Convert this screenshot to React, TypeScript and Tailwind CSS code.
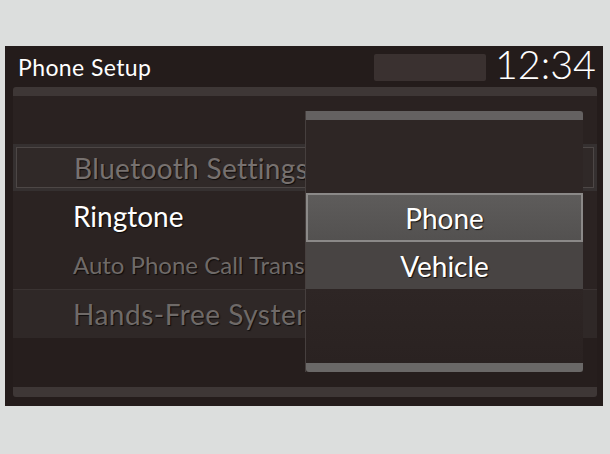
const ROWS = [
  { label: "Bluetooth Settings", size: "text-[28px] tracking-[0.35px]", tone: "text-[#77716f]", h: "h-[47px]", kind: "framed" },
  { label: "Ringtone", size: "text-[28px]", tone: "text-white", h: "h-[49px]", kind: "plain" },
  { label: "Auto Phone Call Transfer", size: "text-[24px]", tone: "text-[#6f6a68]", h: "h-[50px]", kind: "split" },
  { label: "Hands-Free System Volume", size: "text-[28px] tracking-[0.5px]", tone: "text-[#6f6a68]", h: "h-[48px]", kind: "lit" },
];

const OPTIONS = [
  { label: "Phone", active: true },
  { label: "Vehicle", active: false },
];

function ListRow({ row }: { row: (typeof ROWS)[number] }) {
  const text = (
    <span
      className={`whitespace-nowrap leading-none ${row.size} ${row.tone} [text-shadow:1px_1px_1px_rgba(0,0,0,0.7)]`}
    >
      {row.label}
    </span>
  );

  if (row.kind === "framed") {
    return (
      <div className={`${row.h} bg-[#353030] p-[3px]`}>
        <div className="flex h-full items-center overflow-hidden border border-[#4d4746] bg-[#302928] pl-[57px]">
          {text}
        </div>
      </div>
    );
  }

  return (
    <div
      className={`${row.h} flex items-center overflow-hidden pl-[60px] ${
        row.kind === "lit" ? "bg-[#2f2827]" : "bg-[#2b2322]"
      } ${row.kind === "split" ? "border-b border-[#3a3332]" : ""}`}
    >
      {text}
    </div>
  );
}

function RingtonePopup() {
  return (
    <div className="absolute left-[300px] top-[65px] flex h-[261px] w-[278px] flex-col border-l border-[#463f3e] bg-[#2e2625]">
      <div className="h-[9px] rounded-tr-[3px] bg-[#646161]" />
      <div className="h-[73px]" />
      {OPTIONS.map((o) =>
        o.active ? (
          <div
            key={o.label}
            className="flex h-[49px] items-center justify-center border-2 border-[#8b8988] bg-gradient-to-b from-[#5e5c5b] to-[#535150]"
          >
            <span className="text-[28px] leading-none text-white [text-shadow:1px_1px_1px_rgba(0,0,0,0.8)]">
              {o.label}
            </span>
          </div>
        ) : (
          <div
            key={o.label}
            className="flex h-[47px] items-center justify-center bg-[#484443]"
          >
            <span className="text-[28px] leading-none text-white [text-shadow:1px_1px_1px_rgba(0,0,0,0.8)]">
              {o.label}
            </span>
          </div>
        )
      )}
      <div className="flex-1 bg-gradient-to-b from-[#2e2625] to-[#2a2221]" />
      <div className="h-[9px] rounded-b-[3px] bg-[#6a6867]" />
    </div>
  );
}

export default function App() {
  return (
    <div className="h-[454px] w-[610px] bg-[#dcdedd] pl-[5px] pt-[46px] font-['Lato','Noto_Sans',sans-serif]">
      <div className="relative h-[360px] w-[598px] bg-[#241c1b] pl-[8px] pr-[6px]">
        {/* status line */}
        <div className="flex h-[41px] items-start">
          <span className="mt-[10px] pl-[5px] text-[23px] leading-none tracking-[0.4px] text-white">
            Phone Setup
          </span>
          <div className="ml-auto mt-[8px] h-[27px] w-[112px] rounded-[2px] bg-[#3a3130]" />
          <span className="ml-[9px] mr-[1px] mt-[-2px] text-[39.5px] font-light leading-[40px] text-white">
            12:34
          </span>
        </div>

        {/* list */}
        <div className="h-[9px] rounded-t-[3px] bg-[#3e3736]" />
        <div className="h-[48px] bg-[#2a2221]" />
        {ROWS.map((r) => (
          <ListRow key={r.label} row={r} />
        ))}
        <div className="h-[49px] bg-[#261e1d]" />
        <div className="h-[10px] rounded-b-[3px] bg-[#3e3736]" />

        <RingtonePopup />
      </div>
    </div>
  );
}
